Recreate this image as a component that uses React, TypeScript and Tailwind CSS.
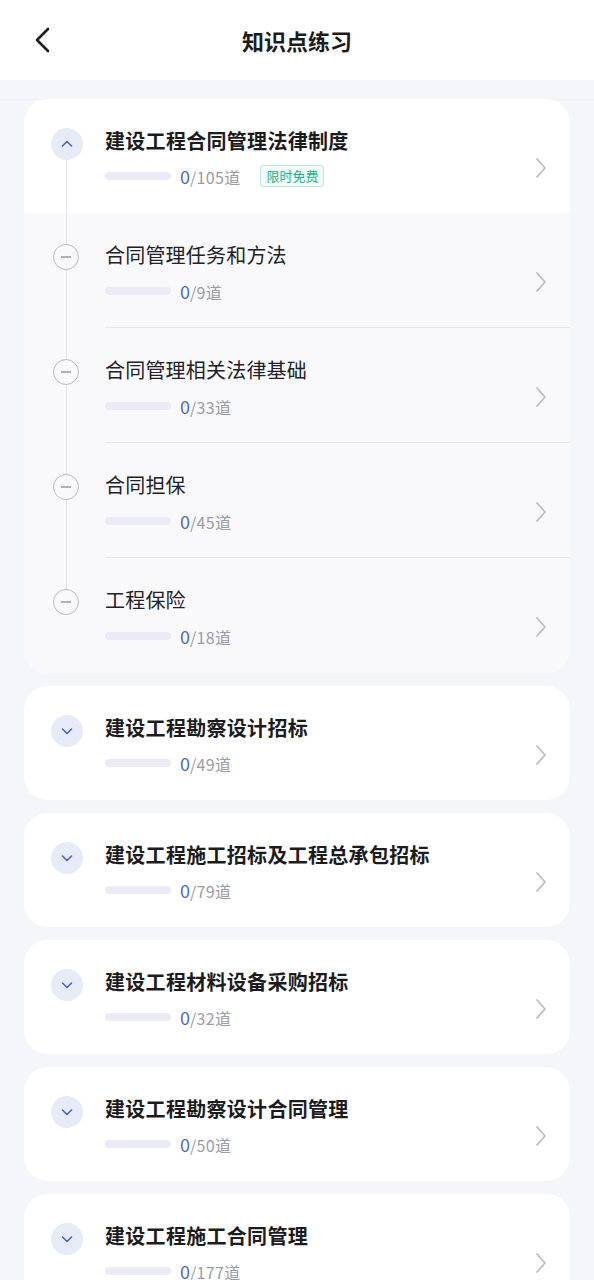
import React from "react"

const font = { fontFamily: '"Noto Sans CJK SC", "Noto Sans", sans-serif' }

interface Chapter {
  title: string
  total: number
  free?: boolean
  open?: boolean
  sections?: { title: string; total: number }[]
}

const chapters: Chapter[] = [
  {
    title: "建设工程合同管理法律制度",
    total: 105,
    free: true,
    open: true,
    sections: [
      { title: "合同管理任务和方法", total: 9 },
      { title: "合同管理相关法律基础", total: 33 },
      { title: "合同担保", total: 45 },
      { title: "工程保险", total: 18 },
    ],
  },
  { title: "建设工程勘察设计招标", total: 49 },
  { title: "建设工程施工招标及工程总承包招标", total: 79 },
  { title: "建设工程材料设备采购招标", total: 32 },
  { title: "建设工程勘察设计合同管理", total: 50 },
  { title: "建设工程施工合同管理", total: 177 },
]

const ChevronRight = () => (
  <svg width="12" height="22" viewBox="0 0 12 22" fill="none">
    <path d="M2 2l8 9-8 9" stroke="#bcbdc2" strokeWidth="1.8" strokeLinecap="round" strokeLinejoin="round" />
  </svg>
)

const Progress = ({ total }: { total: number }) => (
  <div className="flex items-center h-6">
    <div className="w-[66px] h-2 rounded-full bg-[#ebebf7]" />
    <span className="ml-[9px] text-[18px] leading-6 text-[#4f6bc4]">0</span>
    <span className="text-[16px] leading-6 text-[#9a9ca5] mt-[2px] tracking-[0.3px]">/{total}道</span>
  </div>
)

const ChapterCard = ({ c }: { c: Chapter }) => (
  <div className="relative bg-white rounded-[24px] overflow-hidden">
    <div className="flex items-start pl-[27px] pr-[23px] pt-[28px] pb-[25px]">
      <div className="mt-[1px] w-8 h-8 rounded-full bg-[#e7ebf8] flex items-center justify-center shrink-0">
        <svg width="12" height="8" viewBox="0 0 12 8" fill="none">
          <path
            d={c.open ? "M1.5 6l4.5-4.5L10.5 6" : "M1.5 2l4.5 4.5L10.5 2"}
            stroke="#4b64b8"
            strokeWidth="1.6"
            strokeLinecap="round"
            strokeLinejoin="round"
          />
        </svg>
      </div>
      <div className="ml-[22px] flex-1">
        <div className="text-[20px] leading-7 font-bold text-[#1c1c1e] tracking-[0.3px]">{c.title}</div>
        <div className="mt-[9px] flex items-center">
          <Progress total={c.total} />
          {c.free && (
            <span className="ml-[20px] h-[22px] px-[5px] flex items-center rounded-[3px] border border-[#bfe7d8] bg-[#f2fbf7] text-[13px] text-[#22b48a]">
              限时免费
            </span>
          )}
        </div>
      </div>
      <div className="self-center mt-[20px]">
        <ChevronRight />
      </div>
    </div>

    {c.sections && (
      <div className="bg-[#f9f9fc]">
        {c.sections.map((s, i) => (
          <div key={i} className="flex items-stretch h-[115px]">
            <div className="w-[81px] pl-[29px] pt-[31px] shrink-0">
              <div className="relative z-10 w-[26px] h-[26px] rounded-full border-[1.5px] border-[#b9bbc1] bg-[#f9f9fc] flex items-center justify-center">
                <div className="w-[10px] h-[1.5px] bg-[#b0b2b8]" />
              </div>
            </div>
            <div
              className={
                "flex-1 flex items-start pr-[23px] pt-[28px] " +
                (i < c.sections!.length - 1 ? "border-b border-[#e8e9ee]" : "")
              }
            >
              <div className="flex-1">
                <div className="text-[20px] leading-7 text-[#222226] tracking-[0.2px]">{s.title}</div>
                <div className="mt-[10px]">
                  <Progress total={s.total} />
                </div>
              </div>
              <div className="mt-[30px]">
                <ChevronRight />
              </div>
            </div>
          </div>
        ))}
      </div>
    )}

    {c.sections && (
      <div className="absolute left-[42px] top-[61px] h-[430px] w-px bg-[#e3e4e9]" />
    )}
  </div>
)

export default function App() {
  return (
    <div className="w-[594px] h-[1280px] overflow-hidden bg-[#f5f6fa]" style={font}>
      <div className="h-20 bg-white flex items-center relative">
        <div className="pl-[33px]">
          <svg width="18" height="26" viewBox="0 0 18 26" fill="none">
            <path d="M15 2L4 13l11 11" stroke="#1c1c1e" strokeWidth="2.6" strokeLinecap="round" strokeLinejoin="round" />
          </svg>
        </div>
        <div className="absolute inset-x-0 text-center text-[22px] font-bold text-[#1c1c1e] pointer-events-none">
          知识点练习
        </div>
      </div>
      <div className="h-5 border-b border-[#eef0f4]" />
      <div className="px-6 flex flex-col gap-[13px] -mt-px">
        {chapters.map((c, i) => (
          <ChapterCard key={i} c={c} />
        ))}
      </div>
    </div>
  )
}
